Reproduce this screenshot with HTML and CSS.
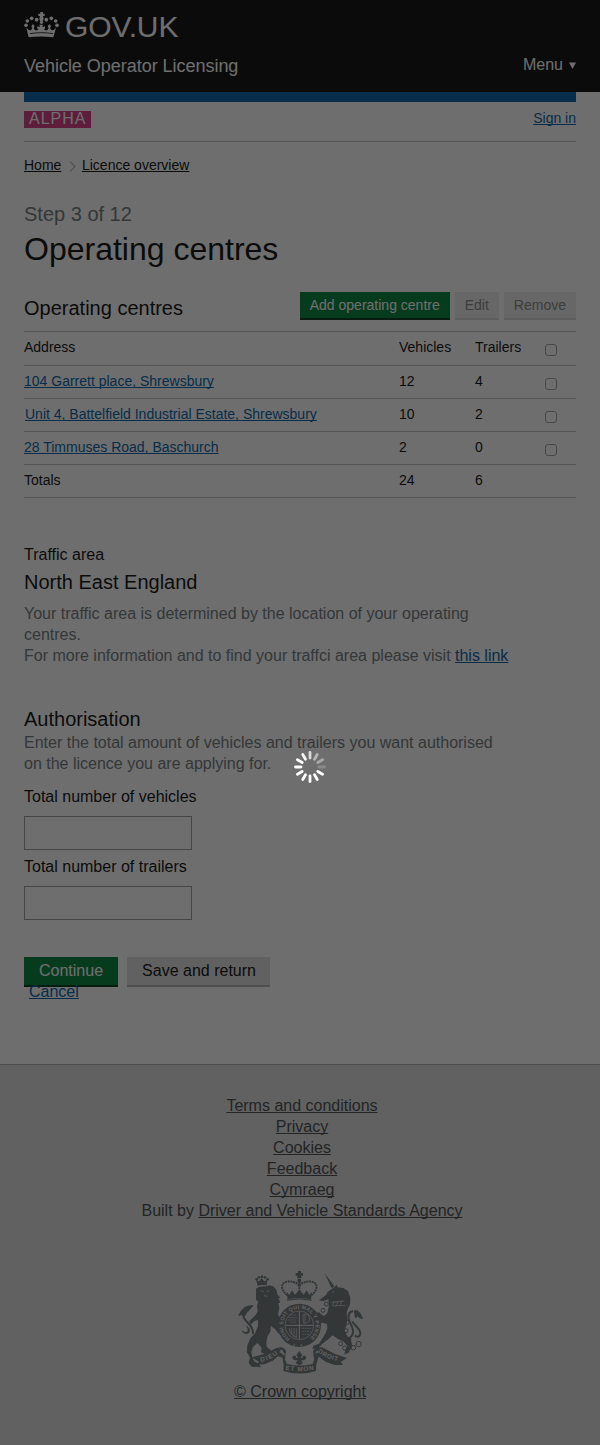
FILE: index.html
```html
<!DOCTYPE html>
<html lang="en">
<head>
<meta charset="utf-8">
<title>Operating centres</title>
<link rel="stylesheet" href="styles.css">
</head>
<body>
<header class="header">
  <div class="brand">
    <svg class="crown" viewBox="72 34 105 79" fill="#fff">
      <path d="M121 36h8v5h5v7h-5l2 9-3 7h-7l-3-7 2-9h-5v-7h6z"/>
      <circle cx="110" cy="59" r="5.500"/><circle cx="95" cy="55" r="5.500"/><circle cx="82" cy="63" r="5.500"/><circle cx="78" cy="76" r="5.500"/>
      <circle cx="139" cy="59" r="5.500"/><circle cx="154" cy="55" r="5.500"/><circle cx="167" cy="63" r="5.500"/><circle cx="171" cy="76" r="5.500"/>
      <circle cx="124.500" cy="67" r="5"/>
      <path d="M79 83l7 7 7 1 4-7-3-5 5-7 5 7-3 5 4 7 6 0 5-3-4-2v-7l8 2-2-7h11l-2 7 8-2v7l-4 2 5 3 6 0 4-7-3-5 5-7 5 7-3 5 4 7 7-1 7-7-8 29c-23-3-51-3-74 0z"/>
      <path d="M90 101c24-4 46-4 69 0" fill="none" stroke="#0b0c0c" stroke-width="2.500"/>
    </svg>
    <span class="wordmark">GOV.UK</span>
  </div>
  <div class="service">
    <span class="service-name">Vehicle Operator Licensing</span>
    <span class="menu">Menu <svg class="caret" viewBox="0 0 7 7"><path d="M0 .5h7l-3.500 6.500z" fill="#fff"/></svg></span>
  </div>
</header>
<main class="page">
  <div class="bar"></div>
  <div class="phase"><span class="tag">ALPHA</span><a class="link small" href="#">Sign in</a></div>
  <nav class="crumbs">
    <a href="#">Home</a>
    <svg class="chevron" viewBox="0 0 7 11"><path d="M1 .5l5 5-5 5" fill="none" stroke="#bfc1c3" stroke-width="1.500"/></svg>
    <a href="#">Licence overview</a>
  </nav>
  <div class="step">Step 3 of 12</div>
  <h1 class="title">Operating centres</h1>
  <div class="toolbar">
    <h2 class="heading">Operating centres</h2>
    <div class="actions">
      <button class="btn btn-sm primary">Add operating centre</button>
      <button class="btn btn-sm disabled">Edit</button>
      <button class="btn btn-sm disabled">Remove</button>
    </div>
  </div>
  <div class="table">
    <div class="row head"><span>Address</span><span>Vehicles</span><span>Trailers</span><i class="check"></i></div>
    <div class="row"><a class="link" href="#">104 Garrett place, Shrewsbury</a><span>12</span><span>4</span><i class="check"></i></div>
    <div class="row"><a class="link indent" href="#">Unit 4, Battelfield Industrial Estate, Shrewsbury</a><span>10</span><span>2</span><i class="check"></i></div>
    <div class="row"><a class="link" href="#">28 Timmuses Road, Baschurch</a><span>2</span><span>0</span><i class="check"></i></div>
    <div class="row"><span>Totals</span><span>24</span><span>6</span></div>
  </div>
  <section class="area">
    <div>Traffic area</div>
    <h2 class="heading area-name">North East England</h2>
    <p class="hint">Your traffic area is determined by the location of your operating<br>centres.<br>For more information and to find your traffci area please visit <a class="link" href="#">this link</a></p>
  </section>
  <section class="auth">
    <h2 class="heading">Authorisation</h2>
    <p class="hint">Enter the total amount of vehicles and trailers you want authorised<br>on the licence you are applying for.</p>
    <label class="field">Total number of vehicles<input class="input" type="text"></label>
    <label class="field">Total number of trailers<input class="input" type="text"></label>
  </section>
  <div class="submit">
    <button class="btn primary">Continue</button>
    <button class="btn secondary">Save and return</button>
  </div>
  <a class="link cancel" href="#">Cancel</a>
</main>
<footer class="footer">
  <div class="footer-links">
    <a href="#">Terms and conditions</a>
    <a href="#">Privacy</a>
    <a href="#">Cookies</a>
    <a href="#">Feedback</a>
    <a href="#">Cymraeg</a>
    <span>Built by <a href="#">Driver and Vehicle Standards Agency</a></span>
  </div>
  <svg class="arms" viewBox="50 30 384 312">
    <defs>
      <path id="garter" d="M209 236A49 49 0 1 1 265 236"/>
      <path id="dieu" d="M122 306Q151 299 177 279"/>
      <path id="etmon" d="M193 329Q238 338 284 329"/>
      <path id="droit" d="M292 276Q323 301 360 304"/>
    </defs>
    <g class="ink">
      <path d="M233 33h9v6h6v8h-6l2 8h-14l2-8h-6v-8h7z"/>
      <circle cx="237" cy="62" r="6"/>
      <g class="pearls">
        <path d="M201 106c-22-18-20-39 0-41 16-2 30 3 36 13M273 106c22-18 20-39 0-41-16-2-30 3-36 13M237 66v36"/>
      </g>
      <path d="M199 95l8 10 8-14 9 13 13-15 13 15 9-13 8 14 8-10-3 24q-35-8-70 0z"/>
      <path class="band" d="M200 121q38-9 74 0"/>
      <circle cx="237" cy="196" r="65"/>
      <path d="M108 60l8 4 8-9 8 9 9-4-2 16q-15-3-28 1z"/>
      <circle cx="109" cy="58" r="4"/><circle cx="116" cy="52" r="4"/><circle cx="125" cy="50" r="4"/><circle cx="134" cy="52" r="4"/><circle cx="142" cy="58" r="4"/>
      <path d="M107 86l10-6 20-1 10-3 12 3 9 10 3 14 9 10-6 2 6 12-6 3 3 14-4 18 6 14 8 12-4 9-12-8 8 16 10 12-3 12-13-10-9-12-13-10 0 16-10 18-3 16 1 13 16 14 11 12-20 3-24-12 2-14-13-14-13 12-5 15 3 17 7 12 12 6 7 11-28-2-9-12 4-16-10-16 2-20 10-22 14-16 8-20 0-18-12 4-10 10-5-10 8-8 10-9 8-12-2-18 4-12-7-6z"/>
      <path class="tail" d="M98 222c4-30-34-38-30-62 2-13 11-16 20-18"/>
      <path d="M100 136c-22-4-40 12-46 31 6 0 9-2 13-6 2 7 5 8 9 6 3-12 13-15 24-31zM76 196c8 12 10 22-3 20l-10-5c4 12 20 15 25 4 3-9-4-14-12-19z"/>
      <path d="M312 38l30 41-8 6zM318 104l4-9 18-12 9-9 3 8 17 2 14 9 7 20-1 20-8 16-2 14 2 16-3 18-6 14 8 16 12 13 4 19-12 20-12 4 3-12 7-12-12-14-18-9-16-10-12 12-18 13-12 13-18 3 3-10 17-6 18-28 7-17-1-14-14-4-13 5-9-6-3-14-14-8-5-12 11-4 12 10 11-2 15 12 10-10 5-24-2-17-16 6-12-3z"/>
      <path class="tail" d="M384 236c24-14 12-34 4-50-8-18-2-32 10-32M396 184c6 14 26 22 24 38-2 10-12 10-16 4"/>
      <path d="M400 152c10-8 24 8 28 26-8-1-12-5-16-9-5 8-10 5-9-3z"/>
      <g class="chain"><circle cx="318" cy="132" r="6"/><circle cx="308" cy="151" r="6"/><circle cx="381" cy="187" r="6"/><circle cx="377" cy="212" r="6"/><circle cx="386" cy="238" r="6"/><circle cx="361" cy="251" r="6"/><circle cx="373" cy="264" r="6"/><circle cx="399" cy="263" r="7"/><circle cx="415" cy="252" r="8"/></g>
      <path d="M94 292l40-11 34-17 19-2-10 14 14 10-3 8-15-5-16 13-25 11-24 1 8-9zM380 294l-36-12-38-20-22 0 11 14-16 10 3 8 13-4 22 16 26 9 26 0-8-9z"/>
      <path d="M190 314l-4-22 8-8-9-15q-16-2-13-5 18-5 25 9l-3 26 6 13q38 9 77 0l5-16-4-22q7-15 25-10l-2 5q-12 0-16 10l9 12-6 24-1 18q-48 15-98 0z"/>
      <path d="M237 273l9 12-5 9h5q1-10 10-6 6 9-6 13h-8l6 9-11 6-11-6 6-9h-8q-12-4-6-13 9-4 10 6h5l-5-9z"/>
    </g>
    <g class="cut">
      <circle cx="237" cy="196" r="43"/>
      <path class="cross" d="M237 154v84M196 196h82"/>
      <path stroke-dasharray="5 2" d="M205 173h25M202 180h27M208 187h21M207 165h22M246 205h26M246 214h24M246 223h20"/>
      <path d="M247 165q16-8 20 8t-17 17zM254 163v25M207 205q0 18 22 28M214 204v20M221 204v27M228 204v30"/>
      <path d="M121 92l9 3M139 94l8-2M131 107l10 2M335 96l6-1M333 127l39-4M337 138l38-2M341 124l-4 14M353 123l-4 14M364 122l-4 14"/>
      <circle cx="222" cy="255" r="2"/><circle cx="243" cy="256" r="2"/>
    </g>
    <g class="motto">
      <text font-size="16"><textPath href="#garter" textLength="244">HONI SOIT QUI MAL Y PENSE</textPath></text>
      <text font-size="19"><textPath href="#dieu" textLength="56">DIEU</textPath></text>
      <text font-size="19"><textPath href="#etmon" startOffset="2" textLength="86">ET MON</textPath></text>
      <text font-size="19"><textPath href="#droit" textLength="66">DROIT</textPath></text>
    </g>
  </svg>
  <a class="copyright" href="#">© Crown copyright</a>
</footer>
<div class="overlay">
  <svg class="spinner" viewBox="-16 -16 32 32" stroke="#fff" stroke-width="2.800" stroke-linecap="round">
    <path d="M9 0h5.500" opacity=".2"/>
    <path d="M9 0h5.500" transform="rotate(30)"/>
    <path d="M9 0h5.500" transform="rotate(60)"/>
    <path d="M9 0h5.500" transform="rotate(90)"/>
    <path d="M9 0h5.500" transform="rotate(120)"/>
    <path d="M9 0h5.500" transform="rotate(150)"/>
    <path d="M9 0h5.500" transform="rotate(180)"/>
    <path d="M9 0h5.500" transform="rotate(210)"/>
    <path d="M9 0h5.500" transform="rotate(240)" opacity=".95"/>
    <path d="M9 0h5.500" transform="rotate(270)" opacity=".75"/>
    <path d="M9 0h5.500" transform="rotate(300)" opacity=".5"/>
    <path d="M9 0h5.500" transform="rotate(330)" opacity=".4"/>
  </svg>
</div>
</body>
</html>
```
FILE: styles.css
```css
* { box-sizing: border-box; }
body { margin: 0; min-height: 1445px; position: relative; background: #fff; color: #0b0c0c; font: 16px/21px "Liberation Sans", Arial, sans-serif; }
h1, h2, p { margin: 0; font-weight: 400; }
a { color: inherit; text-decoration: underline; text-decoration-thickness: 1px; text-underline-offset: 1px; text-decoration-skip-ink: none; }
.link { color: #005ea5; }
.small { font-size: 14px; line-height: 20px; }

.header { height: 92px; padding: 10px 24px 0; background: #0b0c0c; color: #fff; }
.brand { display: flex; height: 34px; align-items: flex-start; }
.crown { width: 35px; height: 27px; margin-top: 1px; }
.wordmark { font-size: 30px; line-height: 34px; margin-left: 6px; letter-spacing: -.1px; }
.service { display: flex; justify-content: space-between; padding-top: 11px; }
.service-name { font-size: 18px; line-height: 22px; letter-spacing: -.03px; }
.menu { display: flex; height: 22px; line-height: 22px; gap: 6px; align-items: center; margin-top: -1px; }
.menu { height: 22px; }
.caret { width: 7px; height: 7px; margin-top: 1px; }

.page { height: 972px; padding: 0 24px; }
.bar { height: 10px; background: #005ea5; }
.phase { display: flex; justify-content: space-between; align-items: flex-start; height: 40px; padding-top: 6px; border-bottom: 1px solid #bfc1c3; }
.tag { margin-top: 3px; height: 17px; padding: 0 5px; background: #d53880; color: #fff; line-height: 15px; letter-spacing: 1px; }
.crumbs { display: flex; height: 47px; margin-bottom: 13px; padding-top: 13px; font-size: 14px; line-height: 20px; }
.chevron { width: 7px; height: 11px; margin: 6px 6px 0 7.600px; }
.step { font-size: 20px; line-height: 24px; color: #6f777b; }
.title { margin-top: 6px; font-size: 32px; line-height: 35px; }
.heading { font-size: 20px; line-height: 24px; }
.toolbar { display: flex; justify-content: space-between; height: 64px; padding-top: 25px; }
.toolbar .heading { padding-top: 4px; }
.actions { display: flex; gap: 5px; }

.btn { height: 30px; padding: 0 15px 2px; border: 0; font: 16px/26px "Liberation Sans", Arial, sans-serif; box-shadow: inset 0 -2px #003618; }
.btn-sm { height: 28px; padding: 0 10px 2px; font-size: 14px; line-height: 24px; }
.primary { background: #00823b; color: #fff; }
.secondary { width: 143px; padding-right: 14px; background: #dedede; color: #0b0c0c; box-shadow: inset 0 -2px #b2b2b2; white-space: nowrap; }
.disabled { background: #eee; color: #858585; box-shadow: inset 0 -2px #d8d8d8; }

.table { border-top: 1px solid #bfc1c3; font-size: 14px; line-height: 20px; }
.row { display: grid; grid-template-columns: 375px 76px 70px 12px; height: 33px; padding-top: 5px; border-bottom: 1px solid #bfc1c3; }
.head { height: 34px; }
.row .link { justify-self: start; }
.indent { margin-left: 1px; }
.check { width: 12px; height: 12px; margin-top: 7px; border: 1px solid #a0a0a0; border-radius: 3px; }

.area { padding-top: 46px; }
.area-name { margin-top: 5px; }
.hint { color: #6f777b; white-space: nowrap; }
.area .hint { margin-top: 9px; }
.auth { padding-top: 41px; }
.auth .hint { margin: 1px 0 12px; }
.field { display: block; height: 70px; }
.input { display: block; width: 168px; height: 34px; margin-top: 9px; border: 1px solid #9a9c9e; background: #fff; }
.submit { display: flex; gap: 9px; margin-top: 31px; }
.cancel { display: block; width: max-content; margin: -6px 0 0 5px; position: relative; }

.footer { display: flex; flex-direction: column; align-items: center; height: 381px; padding-top: 30px; border-top: 1px solid #a8adb0; background: #dedfdf; color: #454a4c; }
.footer-links { display: flex; flex-direction: column; align-items: center; padding-left: 4px; }
.arms { width: 128px; height: 104px; margin: 49px 0 7px 2px; }
.ink { fill: #6f777b; stroke: #6f777b; stroke-width: 0; }
.pearls { fill: none; stroke-width: 6; stroke-dasharray: 6 2; }
.band { fill: none; stroke-width: 3; }
.tail { fill: none; stroke-width: 6; }
.chain { fill: none; stroke-width: 3; }
.cut { fill: none; stroke: #dedfdf; stroke-width: 2; }
.cross { stroke-width: 3; }
.motto { fill: #dedfdf; font-weight: 700; }

.overlay { position: absolute; inset: 0; background: rgba(11, 12, 12, .595); }
.spinner { position: absolute; left: 294px; top: 751px; width: 32px; height: 32px; }
```
